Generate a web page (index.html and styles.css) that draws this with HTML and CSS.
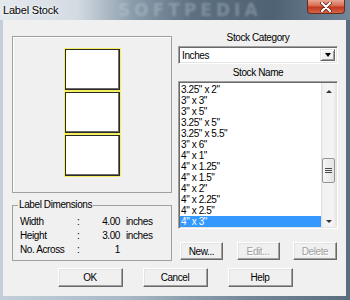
FILE: index.html
```html
<!DOCTYPE html>
<html lang="en">
<head>
    <meta charset="UTF-8">
    <title>Label Stock</title>
    <link rel="stylesheet" href="styles.css">
</head>
<body>
    <div class="window">
        <div class="titlebar">
            <span class="title">Label Stock</span>
            <span class="watermark">SOFTPEDIA</span>
            <div class="close">
                <svg width="14" height="10" viewBox="0 0 14 10">
                    <path d="M3 1 L11 9 M11 1 L3 9" stroke="#5a1a10" stroke-width="3.6" stroke-linecap="round"/>
                    <path d="M3 1 L11 9 M11 1 L3 9" stroke="#fff" stroke-width="2.2" stroke-linecap="round"/>
                </svg>
            </div>
        </div>
        <div class="frame">
            <div class="client">
                <div class="main">
                    <div class="left">
                        <div class="preview">
                            <div class="label"></div>
                            <div class="label"></div>
                            <div class="label"></div>
                        </div>
                        <fieldset class="dims">
                            <legend>Label Dimensions</legend>
                            <div class="dim-row"><span class="dim-name">Width</span><span class="dim-colon">:</span><span class="dim-value">4.00</span><span class="dim-unit">inches</span></div>
                            <div class="dim-row"><span class="dim-name">Height</span><span class="dim-colon">:</span><span class="dim-value">3.00</span><span class="dim-unit">inches</span></div>
                            <div class="dim-row"><span class="dim-name">No. Across</span><span class="dim-colon">:</span><span class="dim-value">1</span></div>
                        </fieldset>
                    </div>
                    <div class="right">
                        <div class="field-label">Stock Category</div>
                        <div class="combo">
                            <span class="combo-text">Inches</span>
                            <span class="combo-arrow"><span class="tri-down"></span></span>
                        </div>
                        <div class="field-label name-label">Stock Name</div>
                        <div class="listbox">
                            <div class="items">
                                <div class="item">3.25" x 2"</div>
                                <div class="item">3" x 3"</div>
                                <div class="item">3" x 5"</div>
                                <div class="item">3.25" x 5"</div>
                                <div class="item">3.25" x 5.5"</div>
                                <div class="item">3" x 6"</div>
                                <div class="item">4" x 1"</div>
                                <div class="item">4" x 1.25"</div>
                                <div class="item">4" x 1.5"</div>
                                <div class="item">4" x 2"</div>
                                <div class="item">4" x 2.25"</div>
                                <div class="item">4" x 2.5"</div>
                                <div class="item selected">4" x 3"</div>
                            </div>
                            <div class="scrollbar">
                                <div class="sb-btn"><span class="sb-up"></span></div>
                                <div class="sb-track">
                                    <div class="sb-thumb"><span class="grip"></span></div>
                                </div>
                                <div class="sb-btn"><span class="sb-down"></span></div>
                            </div>
                        </div>
                        <div class="stock-buttons">
                            <button class="btn small">New...</button>
                            <button class="btn small" disabled>Edit...</button>
                            <button class="btn small wide" disabled>Delete</button>
                        </div>
                    </div>
                </div>
                <div class="actions">
                    <button class="btn big">OK</button>
                    <button class="btn big">Cancel</button>
                    <button class="btn big">Help</button>
                </div>
            </div>
        </div>
    </div>
</body>
</html>
```

FILE: styles.css
```css
* { box-sizing: border-box; }
body {
    margin: 0;
    width: 350px;
    height: 300px;
    overflow: hidden;
    font-family: "Liberation Sans", Arial, sans-serif;
    font-size: 10px;
    letter-spacing: -0.4px;
    color: #000;
}
.window {
    width: 350px;
    height: 300px;
    display: flex;
    flex-direction: column;
    background: linear-gradient(90deg, #c3d0db 0%, #a9b9c7 35%, #748899 70%, #5a6d7d 100%);
}
.titlebar {
    height: 20px;
    position: relative;
    display: flex;
    align-items: center;
    padding-left: 3px;
    overflow: hidden;
    background: linear-gradient(90deg, #e4e9ee 0%, #d3dbe2 22%, #8a9cab 38%, #5d7081 55%, #4f6274 78%, #73879a 100%);
}
.title {
    position: relative;
    z-index: 1;
    font-size: 11px;
    letter-spacing: -0.2px;
    text-shadow: 0 0 4px #fff, 0 0 2px #fff;
}
.watermark {
    position: absolute;
    left: 118px;
    top: 0;
    font: bold 17px/20px "DejaVu Sans", sans-serif;
    letter-spacing: 4px;
    color: rgba(210, 222, 232, 0.3);
    filter: blur(1px);
}
.close {
    position: relative;
    margin-left: auto;
    margin-right: 5px;
    align-self: flex-start;
    width: 38px;
    height: 14px;
    border: 1px solid #6b2a1e;
    border-top: none;
    border-radius: 0 0 4px 4px;
    background: linear-gradient(#e9a795 0%, #d66a50 45%, #c2381f 55%, #d2664a 100%);
    display: flex;
    align-items: center;
    justify-content: center;
}
.frame {
    flex: 1;
    display: flex;
    padding: 0 4px 4px 3px;
}
.client {
    flex: 1;
    display: flex;
    flex-direction: column;
    background: #f0f0f0;
    padding: 11px 8px 9px 9px;
}
.main { display: flex; gap: 6px; }
.left { width: 160px; display: flex; flex-direction: column; }
.preview {
    margin-top: 5px;
    height: 157px;
    border: 1px solid #a0a0a0;
    box-shadow: inset 1px 1px #fff;
    display: flex;
    flex-direction: column;
    align-items: center;
    padding-top: 11px;
}
.label {
    width: 57px;
    height: 43px;
    border: 1px solid #f4ef5c;
    background: #fff;
    box-shadow: inset 0 0 0 1px #2a2a2a, inset -2px -2px #6a6a6a;
    border-radius: 1px;
}
.dims {
    margin: 6px 0 0;
    height: 62px;
    padding: 4px 0 3px 7px;
    border: 1px solid #a0a0a0;
}
.dims legend {
    padding: 0 1px;
    margin-left: -2px;
    line-height: 12px;
}
.dim-row { display: flex; line-height: 14px; }
.dim-name { width: 57px; }
.dim-colon { width: 10px; }
.dim-value { width: 33px; text-align: right; }
.dim-unit { margin-left: 6px; }
.right { width: 160px; display: flex; flex-direction: column; }
.field-label { text-align: center; line-height: 13px; }
.name-label { margin-top: 2px; }
.combo {
    margin-top: 2px;
    height: 18px;
    display: flex;
    background: #fff;
    border: 1px solid;
    border-color: #a0a0a0 #fff #fff #a0a0a0;
    box-shadow: inset 1px 1px #696969, inset -1px -1px #e3e3e3;
    padding: 2px;
}
.combo-text { flex: 1; padding-left: 1px; line-height: 14px; }
.combo-arrow {
    width: 15px;
    background: #f0f0f0;
    border: 1px solid;
    border-color: #e3e3e3 #696969 #696969 #e3e3e3;
    box-shadow: inset 1px 1px #fff, inset -1px -1px #a0a0a0;
    display: flex;
    align-items: center;
    justify-content: center;
}
.tri-down {
    border-left: 3.5px solid transparent;
    border-right: 3.5px solid transparent;
    border-top: 4px solid #000;
}
.listbox {
    margin-top: 2px;
    height: 148px;
    display: flex;
    background: #fff;
    border: 1px solid;
    border-color: #a0a0a0 #fff #fff #a0a0a0;
    box-shadow: inset 1px 1px #696969, inset -1px -1px #e3e3e3;
    padding: 1px;
}
.items { flex: 1; padding-top: 1px; }
.item { line-height: 11px; padding-left: 1px; white-space: nowrap; }
.item.selected { background: #3399ff; color: #fff; }
.scrollbar {
    width: 15px;
    display: flex;
    flex-direction: column;
    background: linear-gradient(90deg, #dcdcdc 0, #f2f2f2 2px, #f4f4f4 12px, #e6e6e6 15px);
}
.sb-btn {
    height: 17px;
    display: flex;
    align-items: center;
    justify-content: center;
}
.sb-up {
    border-left: 3px solid transparent;
    border-right: 3px solid transparent;
    border-bottom: 3px solid #333;
}
.sb-down {
    margin-top: 6px;
    border-left: 3px solid transparent;
    border-right: 3px solid transparent;
    border-top: 3px solid #333;
}
.sb-track { flex: 1; }
.sb-thumb {
    margin: 58px 1px 0 1px;
    height: 25px;
    border: 1px solid #959595;
    border-radius: 2px;
    background: linear-gradient(90deg, #f6f6f6, #e4e4e4);
    display: flex;
    align-items: center;
    justify-content: center;
}
.grip {
    width: 7px;
    height: 5px;
    background: repeating-linear-gradient(#4a4a4a 0 1px, transparent 1px 2px);
}
.stock-buttons {
    margin-top: 13px;
    display: flex;
    justify-content: space-between;
    padding: 0 1px 0 2px;
}
.btn {
    font: inherit;
    letter-spacing: inherit;
    color: #000;
    background: #f0f0f0;
    border: 1px solid;
    border-color: #fff #696969 #696969 #fff;
    box-shadow: inset -1px -1px #a0a0a0, inset 1px 1px #e3e3e3;
    padding: 0;
}
.btn:disabled { color: #a0a0a0; text-shadow: 1px 1px #fff; }
.btn.small { width: 43px; height: 18px; }
.btn.small.wide { width: 44px; }
.actions {
    margin-top: auto;
    display: flex;
    justify-content: center;
    gap: 20px;
}
.btn.big { width: 65px; height: 19px; }
```
